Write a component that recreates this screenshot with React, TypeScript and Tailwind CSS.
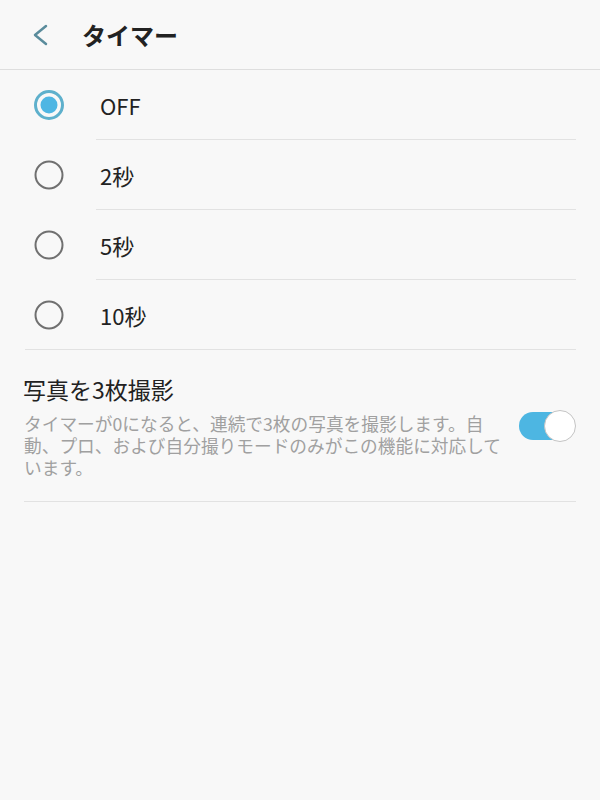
import React from "react";

const font = { fontFamily: '"Noto Sans CJK JP", "Noto Sans", sans-serif' };

function Radio({ checked }: { checked: boolean }) {
  return (
    <svg width="32" height="32" viewBox="0 0 32 32" className="shrink-0">
      {checked ? (
        <>
          <circle cx="16" cy="16" r="13.5" fill="none" stroke="#5eb0cc" strokeWidth="3" />
          <circle cx="16" cy="16" r="8.5" fill="#4fb6e3" />
        </>
      ) : (
        <circle cx="16" cy="16" r="13.5" fill="none" stroke="#707070" strokeWidth="2" />
      )}
    </svg>
  );
}

export default function App() {
  const options = ["OFF", "2秒", "5秒", "10秒"];
  return (
    <div className="w-[600px] h-[800px] bg-[#f8f8f8] text-[#222]" style={font}>
      <div className="h-[70px] flex items-center border-b border-[#dedede]">
        <svg width="20" height="24" viewBox="0 0 20 24" className="ml-[30px]">
          <polyline points="16,3 5,12 16,21" fill="none" stroke="#5a8c9c" strokeWidth="2.5" strokeLinecap="round" strokeLinejoin="round" />
        </svg>
        <span className="ml-[32px] text-[24px] font-bold leading-none">タイマー</span>
      </div>
      <div>
        {options.map((o, i) => (
          <div key={o} className="flex flex-col">
            <div className="h-[69px] flex items-center pl-[33px]">
              <Radio checked={i === 0} />
              <span className="ml-[35px] text-[22px] leading-none">{o}</span>
            </div>
            <div className={`h-px bg-[#e2e2e2] mr-[24px] ${i === 3 ? "ml-[25px]" : "ml-[96px]"}`} />
          </div>
        ))}
      </div>
      <div className="mx-[24px] border-b border-[#e2e2e2] pt-[24px] pb-[23px] flex items-center">
        <div className="flex-1">
          <div className="text-[23px] leading-[30px] -ml-px">写真を3枚撮影</div>
          <div className="mt-[8px] text-[17.7px] leading-[22px] text-[#a0a0a0]">
            <div>タイマーが0になると、連続で3枚の写真を撮影します。自</div>
            <div>動、プロ、および自分撮りモードのみがこの機能に対応して</div>
            <div>います。</div>
          </div>
        </div>
        <div className="relative w-[57px] h-[32px] shrink-0">
          <div className="absolute left-0 top-[2px] w-[48px] h-[28px] rounded-full bg-[#4db6e2]" />
          <div className="absolute right-0 top-0 w-[32px] h-[32px] rounded-full bg-white border border-[#c4c4c4]" />
        </div>
      </div>
    </div>
  );
}
